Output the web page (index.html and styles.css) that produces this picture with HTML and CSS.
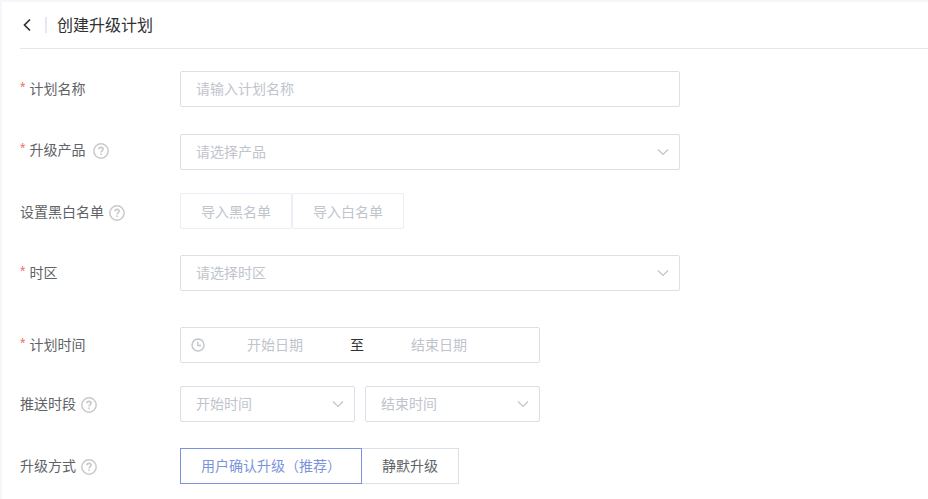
FILE: index.html
```html
<!DOCTYPE html>
<html lang="zh-CN">
<head>
    <meta charset="UTF-8">
    <meta name="viewport" content="width=device-width, initial-scale=1.0">
    <title>创建升级计划</title>
    <link rel="stylesheet" href="styles.css">
</head>
<body>
    <!-- Shared icons -->
    <svg class="icon-defs" aria-hidden="true">
        <symbol id="icon-help" viewBox="0 0 16 16">
            <circle cx="8" cy="8" r="7.2" fill="none" stroke="currentColor" stroke-width="1.5"/>
            <path d="M5.9 6.3C5.9 5.1 6.8 4.4 8 4.4s2.1.8 2.1 1.9c0 1.4-2.1 1.6-2.1 3.2" fill="none" stroke="currentColor" stroke-width="1.6"/>
            <rect x="7.2" y="10.5" width="1.6" height="1.6" fill="currentColor"/>
        </symbol>
        <symbol id="icon-arrow" viewBox="0 0 12 12">
            <path d="M1 3.5l5 5 5-5" fill="none" stroke="currentColor" stroke-width="1.2"/>
        </symbol>
    </svg>

    <main class="page">
        <header class="header">
            <a href="#" class="back" aria-label="返回">
                <svg width="8" height="14" viewBox="0 0 8 14"><path d="M7 1.5L1.5 7 7 12.5" fill="none" stroke="currentColor" stroke-width="1.7"/></svg>
            </a>
            <h1>创建升级计划</h1>
        </header>

        <form class="form">
            <div class="row row-name">
                <div class="label"><label for="planName" class="required">计划名称</label></div>
                <input type="text" id="planName" class="control" placeholder="请输入计划名称">
            </div>

            <div class="row row-tight row-product">
                <div class="label">
                    <label for="product" class="required">升级产品</label>
                    <svg class="help"><use href="#icon-help"/></svg>
                </div>
                <div class="select">
                    <select id="product" class="control"><option>请选择产品</option></select>
                    <svg class="arrow"><use href="#icon-arrow"/></svg>
                </div>
            </div>

            <div class="row row-list" role="group" aria-labelledby="listLabel">
                <div class="label">
                    <span id="listLabel">设置黑白名单</span>
                    <svg class="help"><use href="#icon-help"/></svg>
                </div>
                <div class="buttons">
                    <button type="button" disabled>导入黑名单</button>
                    <button type="button" disabled>导入白名单</button>
                </div>
            </div>

            <div class="row row-wide">
                <div class="label"><label for="timezone" class="required">时区</label></div>
                <div class="select">
                    <select id="timezone" class="control"><option>请选择时区</option></select>
                    <svg class="arrow"><use href="#icon-arrow"/></svg>
                </div>
            </div>

            <div class="row row-tight">
                <div class="label"><label for="startDate" class="required">计划时间</label></div>
                <div class="date-range">
                    <svg class="clock" viewBox="0 0 14 14"><circle cx="7" cy="7" r="6" fill="none" stroke="currentColor" stroke-width="1.4"/><path d="M6.8 3.5v4h3.4" fill="none" stroke="currentColor" stroke-width="1.3"/></svg>
                    <input type="text" id="startDate" placeholder="开始日期">
                    <span>至</span>
                    <input type="text" id="endDate" placeholder="结束日期" aria-label="结束日期">
                </div>
            </div>

            <div class="row">
                <div class="label">
                    <label for="startTime">推送时段</label>
                    <svg class="help"><use href="#icon-help"/></svg>
                </div>
                <div class="time-range">
                    <div class="select">
                        <select id="startTime" class="control"><option>开始时间</option></select>
                        <svg class="arrow"><use href="#icon-arrow"/></svg>
                    </div>
                    <div class="select">
                        <select id="endTime" class="control" aria-label="结束时间"><option>结束时间</option></select>
                        <svg class="arrow"><use href="#icon-arrow"/></svg>
                    </div>
                </div>
            </div>

            <div class="row" role="radiogroup" aria-labelledby="modeLabel">
                <div class="label">
                    <span id="modeLabel">升级方式</span>
                    <svg class="help"><use href="#icon-help"/></svg>
                </div>
                <div class="radios">
                    <label class="radio"><input type="radio" name="mode" value="confirm" checked>用户确认升级（推荐）</label>
                    <label class="radio"><input type="radio" name="mode" value="silent">静默升级</label>
                </div>
            </div>
        </form>
    </main>
</body>
</html>
```

FILE: styles.css
```css
* { box-sizing: border-box; }
body { margin: 0; padding: 2px 0 0 2px; background: #f5f6fa; color: #606266; font-family: "Noto Sans CJK SC", sans-serif; font-size: 14px; line-height: 20px; }
input, select, button { font: inherit; margin: 0; }
.icon-defs { display: none; }
.page { min-height: calc(100vh - 2px); background: #fff; padding-left: 18px; }

.header { display: flex; align-items: center; height: 47px; border-bottom: 1px solid #e4e7f0; color: #303133; }
.back { display: flex; padding: 1px 14px 1px 3px; border-right: 2px solid #e4e9f0; color: #303133; }
h1 { margin: 0 0 0 10px; padding-bottom: 2px; font-size: 16px; font-weight: 400; line-height: 24px; }

.form { padding-top: 22px; }
.row { display: flex; align-items: center; margin-bottom: 26px; }
.row-name { margin-bottom: 27px; }
.row-tight { margin-bottom: 23px; }
.row-wide { margin-bottom: 36px; }
.label { display: flex; flex: 0 0 160px; align-items: center; gap: 5px; padding-bottom: 2px; }
.required::before { content: "*"; margin-right: 4px; color: #f56c6c; font-family: "Liberation Sans", sans-serif; vertical-align: 2px; line-height: 1; }
.help { flex: none; width: 16px; height: 16px; margin-top: 4px; color: #c8c9cc; }
.row-product .label { gap: 8px; padding-bottom: 6px; }
.row-list .label { padding-bottom: 0; }

.control { display: block; width: 100%; height: 36px; padding: 0 15px 2px; border: 1px solid #dcdfe6; border-radius: 2px; background: #fff; color: #606266; }
.row > .control, .row > .select { flex: 0 1 500px; }
.select { position: relative; }
.select .control { appearance: none; padding-right: 30px; color: #c0c4cc; }
.arrow { position: absolute; top: 12px; right: 11px; width: 12px; height: 12px; color: #c0c4cc; pointer-events: none; }
::placeholder { color: #c0c4cc; opacity: 1; }

.buttons, .radios { display: flex; }
.buttons button { height: 36px; padding: 0 20px; border: 1px solid #ebeef5; border-radius: 2px; background: #fff; color: #c0c4cc; }

.date-range { display: grid; grid-template-columns: 18px 1fr 32px 1fr 24px; align-items: center; flex: 0 1 360px; height: 36px; padding: 0 10px; border: 1px solid #dcdfe6; border-radius: 2px; }
.date-range input { width: 100%; padding: 0 0 2px; border: 0; background: none; text-align: center; }
.date-range span { padding-bottom: 2px; color: #303133; text-align: center; }
.clock { width: 14px; height: 14px; color: #c0c4cc; }

.time-range { display: flex; flex: 0 1 360px; gap: 10px; }
.time-range .select { flex: 1; }

.radio { position: relative; height: 36px; padding: 6px 20px; border: 1px solid #dcdfe6; cursor: pointer; }
.radio + .radio { margin-left: -1px; }
.radio input { position: absolute; opacity: 0; }
.radio:has(input:checked) { z-index: 1; border-color: #7b93dc; color: #7b93dc; }
```
